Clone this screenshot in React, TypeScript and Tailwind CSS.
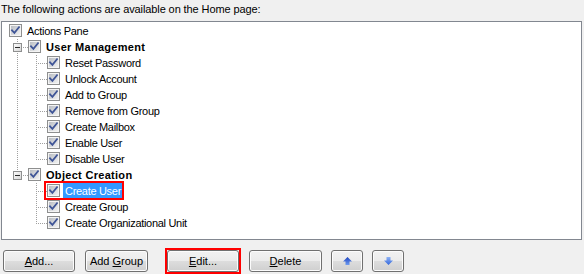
import React from "react";

type Cell = "none" | "v" | "tee" | "elbow" | "expFirst" | "expLast";

const rows: { label: string; bold?: boolean; selected?: boolean; cells: Cell[] }[] = [
  { label: "Actions Pane", cells: [] },
  { label: "User Management", bold: true, cells: ["expFirst"] },
  { label: "Reset Password", cells: ["v", "tee"] },
  { label: "Unlock Account", cells: ["v", "tee"] },
  { label: "Add to Group", cells: ["v", "tee"] },
  { label: "Remove from Group", cells: ["v", "tee"] },
  { label: "Create Mailbox", cells: ["v", "tee"] },
  { label: "Enable User", cells: ["v", "tee"] },
  { label: "Disable User", cells: ["v", "elbow"] },
  { label: "Object Creation", bold: true, cells: ["expLast"] },
  { label: "Create User", selected: true, cells: ["none", "tee"] },
  { label: "Create Group", cells: ["none", "tee"] },
  { label: "Create Organizational Unit", cells: ["none", "elbow"] },
];

const DOT = "#a0a0a0";

function Gutter({ kind }: { kind: Cell }) {
  const dash = "1 1";
  return (
    <svg width="19" height="16" viewBox="0 0 19 16" className="shrink-0 block" shapeRendering="crispEdges">
      <defs>
        <linearGradient id="expg" x1="0" y1="0" x2="1" y2="1">
          <stop offset="0" stopColor="#ffffff" />
          <stop offset="1" stopColor="#d4d4d4" />
        </linearGradient>
      </defs>
      {(kind === "v" || kind === "tee") && (
        <line x1="8.5" y1="0" x2="8.5" y2="16" stroke={DOT} strokeDasharray={dash} />
      )}
      {kind === "elbow" && <line x1="8.5" y1="0" x2="8.5" y2="9" stroke={DOT} strokeDasharray={dash} />}
      {(kind === "tee" || kind === "elbow") && (
        <line x1="10" y1="8.5" x2="19" y2="8.5" stroke={DOT} strokeDasharray={dash} />
      )}
      {(kind === "expFirst" || kind === "expLast") && (
        <g>
          <line x1="8.5" y1="0" x2="8.5" y2="4" stroke={DOT} strokeDasharray={dash} />
          {kind === "expFirst" && (
            <line x1="8.5" y1="14" x2="8.5" y2="16" stroke={DOT} strokeDasharray={dash} />
          )}
          <line x1="14" y1="8.5" x2="19" y2="8.5" stroke={DOT} strokeDasharray={dash} />
          <rect x="4.5" y="4.5" width="8" height="8" fill="url(#expg)" stroke="#8e8f8f" />
          <line x1="6" y1="8.5" x2="11" y2="8.5" stroke="#2a2a2a" />
        </g>
      )}
    </svg>
  );
}

function CheckBox() {
  return (
    <svg width="13" height="13" viewBox="0 0 13 13" className="shrink-0 block mt-[1px]">
      <defs>
        <linearGradient id="cbin" x1="0" y1="0" x2="1" y2="1">
          <stop offset="0" stopColor="#b9bdc3" />
          <stop offset="1" stopColor="#f2f2f2" />
        </linearGradient>
      </defs>
      <rect x="0.5" y="0.5" width="12" height="12" fill="#f4f4f4" stroke="#8e8f8f" shapeRendering="crispEdges" />
      <rect x="2" y="2" width="9" height="9" fill="url(#cbin)" shapeRendering="crispEdges" />
      <path d="M3 6.3 L5.4 8.9 L10 3.2" fill="none" stroke="#3f5597" strokeWidth="1.8" strokeLinecap="square" />
    </svg>
  );
}

function UpArrow() {
  return (
    <svg width="9" height="8" viewBox="0 0 9 8" className="block">
      <defs>
        <linearGradient id="upg" x1="0" y1="0" x2="0" y2="1">
          <stop offset="0" stopColor="#1e44c0" />
          <stop offset="1" stopColor="#6f9cf0" />
        </linearGradient>
      </defs>
      <path d="M4.5 0 L9 4.5 L6.5 4.5 L6.5 8 L2.5 8 L2.5 4.5 L0 4.5 Z" fill="url(#upg)" />
    </svg>
  );
}

function DownArrow() {
  return (
    <svg width="9" height="8" viewBox="0 0 9 8" className="block">
      <defs>
        <linearGradient id="dng" x1="0" y1="0" x2="0" y2="1">
          <stop offset="0" stopColor="#8fb3f5" />
          <stop offset="1" stopColor="#3266dc" />
        </linearGradient>
      </defs>
      <path d="M2.5 0 L6.5 0 L6.5 3.5 L9 3.5 L4.5 8 L0 3.5 L2.5 3.5 Z" fill="url(#dng)" />
    </svg>
  );
}

function Btn({ children, className }: { children: React.ReactNode; className: string }) {
  return (
    <div
      className={
        "h-[22px] shrink-0 rounded-[3px] border border-[#707070] flex items-center justify-center text-black " +
        "bg-[linear-gradient(to_bottom,#f2f2f2_0%,#ebebeb_50%,#dddddd_51%,#cfcfcf_100%)] shadow-[inset_0_0_0_1px_#fcfcfc] " +
        className
      }
    >
      {children}
    </div>
  );
}

export default function App() {
  return (
    <div
      className="w-[584px] h-[274px] bg-[#f0f0f0] overflow-hidden text-[11px] text-black"
      style={{ fontFamily: '"Liberation Sans", Arial, sans-serif' }}
    >
      <div className="pl-[1px] pt-[3px] leading-[13px] tracking-[-0.1px]">
        The following actions are available on the Home page:
      </div>
      <div className="ml-[1px] mt-[5px] w-[581px] h-[219px] border border-[#828790] bg-white pt-[1px]">
        {rows.map((r, i) => (
          <div key={i} className="flex h-[16px] items-start pl-[7px]">
            {r.cells.map((c, j) => (
              <Gutter key={j} kind={c} />
            ))}
            <div className="relative flex items-start">
              <CheckBox />
              <span
                className={
                  "ml-[3px] px-[2px] h-[16px] leading-[16px] whitespace-nowrap " +
                  (r.bold ? "font-bold tracking-[0.3px] " : "tracking-[-0.3px] ") +
                  (r.selected ? "bg-[#3399ff] text-white" : "")
                }
              >
                {r.label}
              </span>
              {r.selected && (
                <span className="absolute left-[-3px] top-[-2px] right-[-1px] bottom-[-1px] border-2 border-[#f00]" />
              )}
            </div>
          </div>
        ))}
      </div>
      <div className="flex items-start mt-[10px] pl-[3px] leading-[13px]">
        <Btn className="w-[72px]">
          <span><u>A</u>dd...</span>
        </Btn>
        <Btn className="w-[63px] ml-[10px]">
          <span>Add <u>G</u>roup</span>
        </Btn>
        <div className="ml-[17px] mr-[-2px] mt-[-2px] border-2 border-[#f00] shrink-0">
          <Btn className="w-[72px]">
            <span><u>E</u>dit...</span>
          </Btn>
        </div>
        <Btn className="w-[73px] ml-[10px]">
          <span><u>D</u>elete</span>
        </Btn>
        <Btn className="w-[32px] ml-[9px]">
          <UpArrow />
        </Btn>
        <Btn className="w-[32px] ml-[9px]">
          <DownArrow />
        </Btn>
      </div>
    </div>
  );
}
